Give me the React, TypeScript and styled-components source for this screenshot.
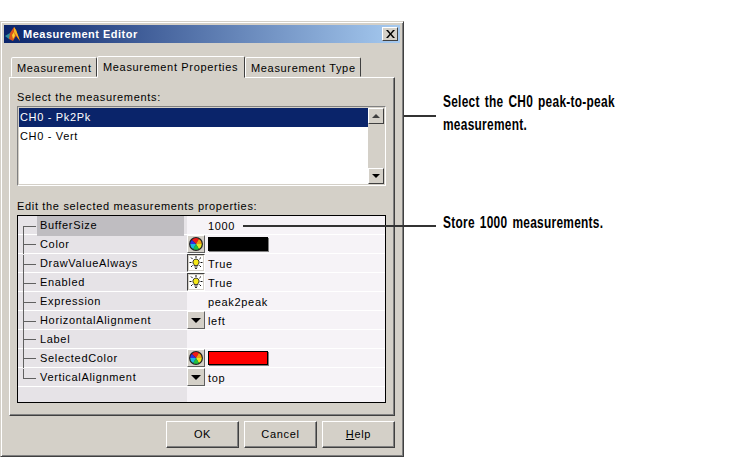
import React from 'react';
import styled, { createGlobalStyle } from 'styled-components';

const Global = createGlobalStyle`
  html, body { margin: 0; padding: 0; background: #fff; }
  body { width: 750px; height: 475px; overflow: hidden; font-family: "Liberation Sans", Arial, sans-serif; }
`;

const Canvas = styled.div`
  position: relative;
  width: 750px;
  height: 475px;
  padding: 21px 0 0 0;
  box-sizing: border-box;
  background: #fff;
`;

const Win = styled.div`
  width: 404px;
  height: 436px;
  box-sizing: border-box;
  background: #d4d0c8;
  border: 1px solid;
  border-color: #d4d0c8 #404040 #404040 #d4d0c8;
  box-shadow: inset 1px 1px 0 #fff, inset -1px -1px 0 #808080;
  padding: 3px;
  display: flex;
  flex-direction: column;
  font-size: 11px;
  letter-spacing: 0.67px;
  color: #000;
`;

const TitleBar = styled.div`
  height: 18px;
  flex: none;
  display: flex;
  align-items: center;
  padding: 0 2px 0 1px;
  background: linear-gradient(90deg, #0a246a, #a6caf0);
  color: #fff;
  font-weight: 700;
  font-size: 11px;
  letter-spacing: 0.5px;
  gap: 2px;
`;

const TitleText = styled.span`
  flex: 1;
`;

const CloseBox = styled.div`
  width: 16px;
  height: 14px;
  box-sizing: border-box;
  background: #d4d0c8;
  border: 1px solid;
  border-color: #fff #404040 #404040 #fff;
  display: flex;
  align-items: center;
  justify-content: center;
`;

const TabStrip = styled.div`
  height: 34px;
  flex: none;
  display: flex;
  align-items: flex-end;
  padding-left: 7px;
  position: relative;
  z-index: 1;
`;

const Tab = styled.div<{ $active?: boolean; $w: number }>`
  width: ${p => p.$w}px;
  height: ${p => (p.$active ? 22 : 20)}px;
  box-sizing: border-box;
  border: 1px solid;
  border-color: #fff #404040 transparent #fff;
  border-radius: 2px 2px 0 0;
  background: #d4d0c8;
  padding: 3px 0 0 5px;
  line-height: 14px;
  white-space: nowrap;
  margin-bottom: ${p => (p.$active ? -1 : 0)}px;
  overflow: hidden;
`;

const Panel = styled.div`
  width: 386px;
  height: 339px;
  margin-left: 5px;
  flex: none;
  box-sizing: border-box;
  border: 1px solid;
  border-color: #fff #404040 #404040 #fff;
  box-shadow: inset -1px -1px 0 #808080;
  padding: 13px 7px 0 7px;
`;

const GroupLabel = styled.div`
  height: 13px;
  line-height: 13px;
`;

const ListFrame = styled.div`
  margin-top: 2px;
  width: 369px;
  height: 80px;
  box-sizing: border-box;
  border: 1px solid;
  border-color: #808080 #fff #fff #808080;
  padding: 1px;
  display: flex;
`;

const ListItems = styled.div`
  flex: 1;
  background: #fff;
  line-height: 19px;
`;

const ListItem = styled.div<{ $selected?: boolean }>`
  height: 19px;
  padding-left: 1px;
  background: ${p => (p.$selected ? '#0a246a' : 'transparent')};
  color: ${p => (p.$selected ? '#fff' : '#000')};
`;

const ScrollBar = styled.div`
  width: 16px;
  display: flex;
  flex-direction: column;
  justify-content: space-between;
`;

const ScrollBtn = styled.div`
  height: 16px;
  box-sizing: border-box;
  background: #d4d0c8;
  border: 1px solid;
  border-color: #fff #404040 #404040 #fff;
  display: flex;
  align-items: center;
  justify-content: center;
`;

const Arrow = styled.span<{ $down?: boolean; $size?: number }>`
  width: 0;
  height: 0;
  border-left: ${p => p.$size ?? 4}px solid transparent;
  border-right: ${p => p.$size ?? 4}px solid transparent;
  ${p => (p.$down
    ? `border-top: ${p.$size ?? 4}px solid #000;`
    : `border-bottom: ${p.$size ?? 4}px solid #404040;`)}
`;

const PropLabel = styled(GroupLabel)`
  margin-top: 14px;
`;

const Table = styled.div`
  margin-top: 2px;
  width: 369px;
  height: 188px;
  box-sizing: border-box;
  border: 1px solid #000;
  background: linear-gradient(90deg, #e6e3e7 0 169px, #f6f3f7 169px);
`;

const Row = styled.div`
  height: 19px;
  box-sizing: border-box;
  border-bottom: 1px solid #fff;
  display: grid;
  grid-template-columns: 169px 1fr;
`;

const NameCell = styled.div`
  display: flex;
  align-items: center;
  padding: 0 3px 0 5px;
`;

const Tree = styled.span<{ $last?: boolean; $first?: boolean }>`
  width: 14px;
  height: 19px;
  flex: none;
  position: relative;
  &::before {
    content: '';
    position: absolute;
    left: 0;
    top: ${p => (p.$first ? '9px' : '0')};
    height: ${p => (p.$last ? '10px' : p.$first ? '10px' : '19px')};
    border-left: 1px solid #606060;
  }
  &::after {
    content: '';
    position: absolute;
    left: 0;
    top: 9px;
    width: 13px;
    border-top: 1px solid #606060;
  }
`;

const NameText = styled.span<{ $selected?: boolean }>`
  align-self: stretch;
  flex: 1;
  line-height: 18px;
  padding-left: 3px;
  background: ${p => (p.$selected ? '#bfbdc1' : 'transparent')};
`;

const ValueCell = styled.div`
  display: flex;
  align-items: flex-start;
  line-height: 20px;
`;

const ValueText = styled.span<{ $indent: number }>`
  padding-left: ${p => p.$indent}px;
`;

const CellBtn = styled.div<{ $pressed?: boolean }>`
  width: 18px;
  height: 18px;
  flex: none;
  box-sizing: border-box;
  background: #d4d0c8;
  border: 1px solid;
  border-color: ${p => (p.$pressed ? '#404040 #fff #fff #404040' : '#fff #606060 #606060 #fff')};
  display: flex;
  align-items: center;
  justify-content: center;
`;

const Swatch = styled.div<{ $color: string }>`
  width: 60px;
  height: 14px;
  margin: 2px 0 0 3px;
  box-sizing: border-box;
  background: ${p => p.$color};
  border: 1px solid #000;
  box-shadow: 1px 1px 0 #808080;
`;

const Footer = styled.div`
  flex: 1;
  display: flex;
  justify-content: flex-end;
  gap: 5px;
  padding: 5px 5px 0 0;
`;

const Btn = styled.div`
  width: 73px;
  height: 27px;
  box-sizing: border-box;
  border: 1px solid;
  border-color: #fff #404040 #404040 #fff;
  box-shadow: inset -1px -1px 0 #808080;
  text-align: center;
  line-height: 24px;
`;

const Under = styled.span`
  text-decoration: underline;
`;

const Callout = styled.div<{ $top: number }>`
  position: absolute;
  left: 443px;
  top: ${p => p.$top}px;
  color: #000;
  font-family: "Liberation Sans", Arial, sans-serif;
  font-weight: 700;
  font-size: 17px;
  line-height: 23px;
  letter-spacing: 0.4px;
  word-spacing: 2px;
  transform: scaleX(0.7);
  transform-origin: left top;
  white-space: nowrap;
`;

const Leader = styled.div<{ $x: number; $y: number; $w: number }>`
  position: absolute;
  left: ${p => p.$x}px;
  top: ${p => p.$y}px;
  width: ${p => p.$w}px;
  height: 2px;
  background: #333;
`;

const Logo = () => (
  <svg width="16" height="15" viewBox="0 0 16 15">
    <path d="M0 9 L5 6 L7 8 L4 12 Z" fill="#2f8f9f" />
    <path d="M5 6 L9 0 L11 3 L15 14 L11 9 L8 14 L4 12 Z" fill="#d9541a" />
    <path d="M9 0 L11 3 L15 14 L11 8 L9 5 Z" fill="#f5b820" />
    <path d="M7 8 L9 5 L10 9 L8 12 Z" fill="#f8d030" />
  </svg>
);

const CloseIcon = () => (
  <svg width="9" height="8" viewBox="0 0 9 8">
    <path d="M0 0 L2 0 L4.5 3 L7 0 L9 0 L5.5 4 L9 8 L7 8 L4.5 5 L2 8 L0 8 L3.5 4 Z" fill="#000" />
  </svg>
);

const Wheel = () => (
  <svg width="14" height="14" viewBox="0 0 12 12">
    <circle cx="6" cy="6" r="6" fill="#222" />
    <path d="M6 6 L2.5 2.5 A5 5 0 0 1 8.5 1.7 Z" fill="#f01818" />
    <path d="M6 6 L8.5 1.7 A5 5 0 0 1 11 6 Z" fill="#f0a010" />
    <path d="M6 6 L11 6 A5 5 0 0 1 8.5 10.3 Z" fill="#e8e820" />
    <path d="M6 6 L8.5 10.3 A5 5 0 0 1 3.5 10.3 Z" fill="#20c040" />
    <path d="M6 6 L3.5 10.3 A5 5 0 0 1 1 6 Z" fill="#18b8e0" />
    <path d="M6 6 L1 6 A5 5 0 0 1 2.5 2.5 Z" fill="#3030e0" />
  </svg>
);

const Bulb = () => (
  <svg width="14" height="14" viewBox="0 0 14 14">
    <rect width="14" height="14" fill="#fff" />
    <path d="M7 3 a3.2 3.2 0 0 1 2 5.6 v1 h-4 v-1 a3.2 3.2 0 0 1 2 -5.6z" fill="#f4e818" stroke="#222" strokeWidth="0.9" />
    <path d="M5.5 11 h3 M6 12.5 h2" stroke="#333" strokeWidth="1.2" />
    <path d="M7 0 v2 M2 1.5 l1.6 1.6 M12 1.5 l-1.6 1.6 M0.5 6.5 h2 M11.5 6.5 h2 M2 11 l1.6-1.6 M12 11 l-1.6-1.6" stroke="#111" strokeWidth="1" />
  </svg>
);

type P = { name: string; kind?: 'color' | 'bool' | 'enum'; value?: string; color?: string };
const props: P[] = [
  { name: 'BufferSize', value: '1000' },
  { name: 'Color', kind: 'color', color: '#000' },
  { name: 'DrawValueAlways', kind: 'bool', value: 'True' },
  { name: 'Enabled', kind: 'bool', value: 'True' },
  { name: 'Expression', value: 'peak2peak' },
  { name: 'HorizontalAlignment', kind: 'enum', value: 'left' },
  { name: 'Label' },
  { name: 'SelectedColor', kind: 'color', color: '#f00' },
  { name: 'VerticalAlignment', kind: 'enum', value: 'top' },
];

export default function App() {
  return (
    <Canvas>
      <Global />
      <Win>
        <TitleBar>
          <Logo />
          <TitleText>Measurement Editor</TitleText>
          <CloseBox><CloseIcon /></CloseBox>
        </TitleBar>
        <TabStrip>
          <Tab $w={86}>Measurement</Tab>
          <Tab $active $w={148}>Measurement Properties</Tab>
          <Tab $w={116}>Measurement Type</Tab>
        </TabStrip>
        <Panel>
          <GroupLabel>Select the measurements:</GroupLabel>
          <ListFrame>
            <ListItems>
              <ListItem $selected>CH0 - Pk2Pk</ListItem>
              <ListItem>CH0 - Vert</ListItem>
            </ListItems>
            <ScrollBar>
              <ScrollBtn><Arrow /></ScrollBtn>
              <ScrollBtn><Arrow $down /></ScrollBtn>
            </ScrollBar>
          </ListFrame>
          <PropLabel>Edit the selected measurements properties:</PropLabel>
          <Table>
            {props.map((p, i) => (
              <Row key={p.name}>
                <NameCell>
                  <Tree $first={i === 0} $last={i === props.length - 1} />
                  <NameText $selected={i === 0}>{p.name}</NameText>
                </NameCell>
                <ValueCell>
                  {p.kind === 'color' && <CellBtn><Wheel /></CellBtn>}
                  {p.kind === 'bool' && <CellBtn $pressed><Bulb /></CellBtn>}
                  {p.kind === 'enum' && <CellBtn><Arrow $down $size={5} /></CellBtn>}
                  {p.color && <Swatch $color={p.color} />}
                  {p.value && <ValueText $indent={p.kind ? 3 : 21}>{p.value}</ValueText>}
                </ValueCell>
              </Row>
            ))}
          </Table>
        </Panel>
        <Footer>
          <Btn>OK</Btn>
          <Btn>Cancel</Btn>
          <Btn><Under>H</Under>elp</Btn>
        </Footer>
      </Win>
      <Leader $x={404} $y={115} $w={32} />
      <Leader $x={243} $y={225} $w={193} />
      <Callout $top={90}>Select the CH0 peak-to-peak<br />measurement.</Callout>
      <Callout $top={211}>Store 1000 measurements.</Callout>
    </Canvas>
  );
}
